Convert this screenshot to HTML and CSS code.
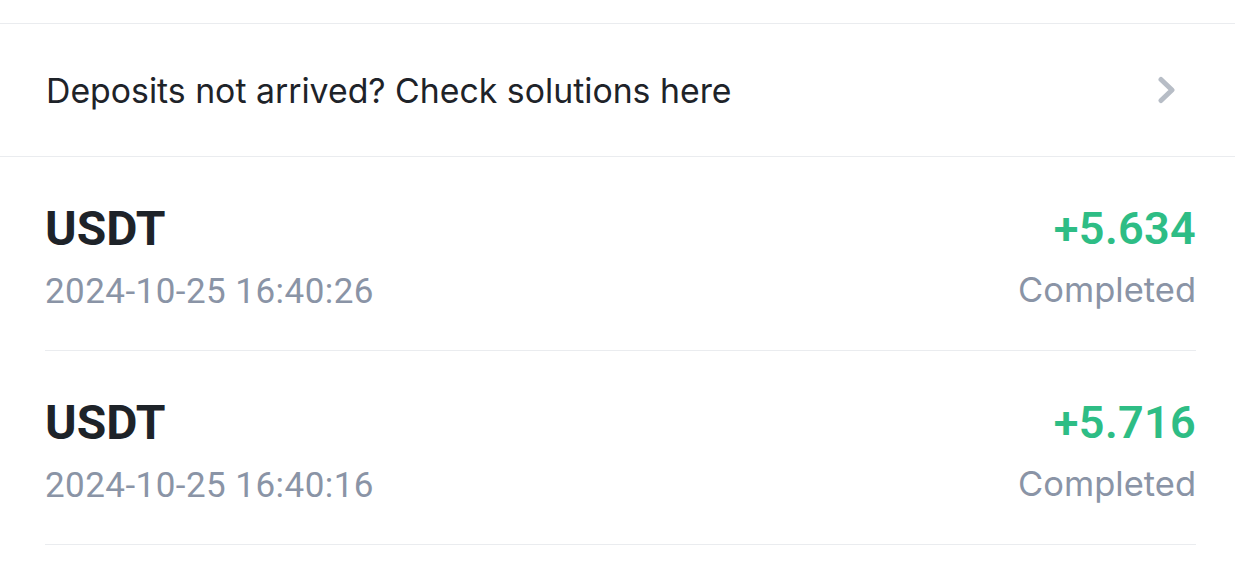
FILE: index.html
```html
<!DOCTYPE html>
<html lang="en">
<head>
    <meta charset="UTF-8">
    <title>Deposit History</title>
    <link rel="stylesheet" href="styles.css">
</head>
<body>
    <div class="page">
        <div class="top-bar"></div>

        <!-- Help banner -->
        <a href="#" class="help-banner">
            <span>Deposits not arrived? Check solutions here</span>
            <svg class="chevron" width="20" height="28" viewBox="0 0 20 28">
                <path d="M4 3.5 L15 14 L4 24.5" fill="none" stroke="#b7bdc6" stroke-width="5" stroke-linecap="round" stroke-linejoin="round"/>
            </svg>
        </a>

        <!-- Deposit records -->
        <div class="records">
            <div class="record">
                <div class="record-left">
                    <div class="coin">USDT</div>
                    <div class="time">2024-10-25 16:40:26</div>
                </div>
                <div class="record-right">
                    <div class="amount">+5.634</div>
                    <div class="status">Completed</div>
                </div>
            </div>
            <div class="record">
                <div class="record-left">
                    <div class="coin">USDT</div>
                    <div class="time">2024-10-25 16:40:16</div>
                </div>
                <div class="record-right">
                    <div class="amount">+5.716</div>
                    <div class="status">Completed</div>
                </div>
            </div>
        </div>
    </div>
</body>
</html>
```

FILE: styles.css
```css
* {
    margin: 0;
    padding: 0;
    box-sizing: border-box;
}

body {
    background: #fff;
    font-family: 'Inter', 'Roboto', sans-serif;
    color: #1e2329;
}

.page {
    width: 1235px;
    height: 588px;
    overflow: hidden;
}

.top-bar {
    height: 24px;
    border-bottom: 1px solid #eaecef;
}

.help-banner {
    display: flex;
    justify-content: space-between;
    align-items: center;
    height: 133px;
    padding: 0 58px 0 46px;
    border-bottom: 1px solid #eaecef;
    text-decoration: none;
    color: #1e2329;
    font-size: 33.8px;
}

.records {
    padding: 0 39px 0 45px;
}

.record {
    display: flex;
    justify-content: space-between;
    height: 194px;
    padding-top: 42px;
    border-bottom: 1px solid #eaecef;
}

.coin {
    font-family: 'Roboto', sans-serif;
    font-weight: 700;
    font-size: 48px;
    line-height: 60px;
}

.time {
    margin-top: 8px;
    font-family: 'Roboto', sans-serif;
    font-size: 35px;
    line-height: 50px;
    letter-spacing: 0.45px;
    color: #8a94a6;
}

.record-right {
    text-align: right;
}

.amount {
    font-family: 'Roboto', sans-serif;
    font-weight: 600;
    font-size: 45px;
    line-height: 60px;
    letter-spacing: 0.3px;
    color: #2ebd85;
}

.status {
    margin-top: 6px;
    font-size: 34.5px;
    line-height: 50px;
    color: #8a94a6;
}
```
